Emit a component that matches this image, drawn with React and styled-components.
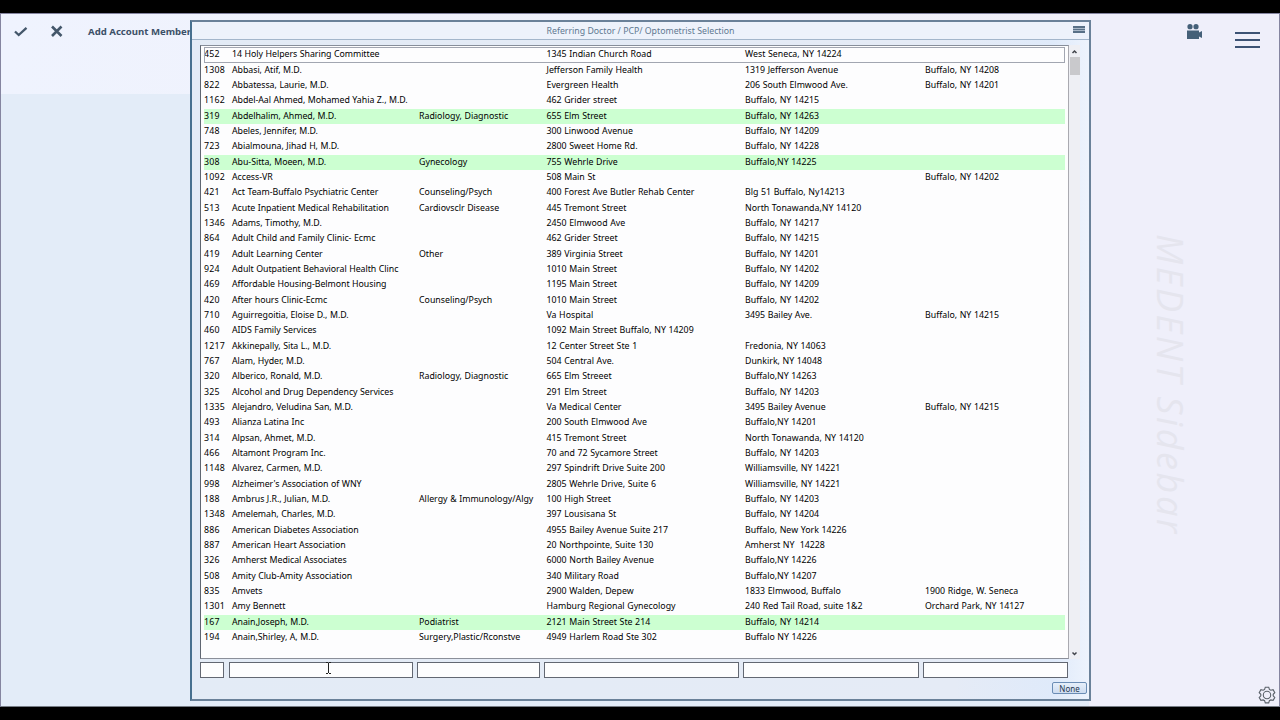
import React from 'react';
import styled, { createGlobalStyle } from 'styled-components';

const GlobalStyle = createGlobalStyle`
  * {
    box-sizing: border-box;
  }

  body {
    margin: 0;
    background: #000;
    font-family: 'Noto Sans', 'Open Sans', sans-serif;
  }
`;

const Screen = styled.div`
  width: 1280px;
  height: 720px;
  padding: 13px 0 13px;
  background: #000;
  overflow: hidden;
`;

const Workspace = styled.div`
  position: relative;
  display: flex;
  height: 694px;
  border: 1px solid #8585a0;
  border-bottom-color: #777d86;
  background: #e9f0f9;
`;

const MainArea = styled.main`
  flex: 1;
  display: flex;
  flex-direction: column;
  background: #e3ecf8;
`;

const Toolbar = styled.header`
  display: flex;
  align-items: flex-start;
  height: 80px;
  padding: 9px 0 0 12px;
  background: linear-gradient(90deg, #eff3fe, #f1f0f9);
`;

const PageTitle = styled.h1`
  margin: 0 0 0 24px;
  color: #3c5068;
  font: 700 9.6px/17px 'Noto Sans', sans-serif;
  white-space: nowrap;
`;

const Sidebar = styled.aside`
  display: flex;
  flex-direction: column;
  width: 190px;
  background: #efeffa;
`;

const SidebarTools = styled.div`
  display: flex;
  gap: 32px;
  height: 220px;
  padding: 10px 0 0 97px;
`;

const MenuLines = styled.span`
  display: flex;
  flex-direction: column;
  gap: 5px;
  width: 25px;
  padding-top: 8px;

  i {
    height: 2px;
    background: #3c5274;
  }
`;

const Watermark = styled.div`
  align-self: flex-start;
  margin-left: 62px;
  color: #e5e5ee;
  font: italic 400 36px/38px 'Open Sans', sans-serif;
  letter-spacing: 2.6px;
  white-space: nowrap;
  writing-mode: vertical-rl;
`;

const SidebarFooter = styled.div`
  display: flex;
  justify-content: flex-end;
  margin-top: auto;
  padding: 0 3px 2px 0;

  svg {
    display: block;
  }
`;

const Dialog = styled.section`
  position: absolute;
  top: 6px;
  left: 189px;
  display: flex;
  flex-direction: column;
  width: 901px;
  height: 681px;
  border: 2px solid #6a8199;
  border-left-color: #47708f;
  background: linear-gradient(90deg, #e3ebf6 0, #e5ebf6 85%, #dfeafa 96%, #edf3fd 100%);
`;

const TitleBar = styled.div`
  display: grid;
  grid-template-columns: 16px 1fr 16px;
  height: 18px;
  border-bottom: 1px solid #a3b6cb;
  background: #edf2fb;
`;

const DialogTitle = styled.h2`
  margin: 0;
  color: #5f7991;
  font-size: 8.75px;
  font-weight: 400;
  line-height: 19px;
  text-align: center;
`;

const TitleMenu = styled.span`
  width: 12px;
  height: 7px;
  margin-top: 4px;
  border-top: 2px solid #587087;
  border-bottom: 2px solid #587087;
  background: linear-gradient(#a9b8c8 1px, #587087 1px, #587087 2px, #a9b8c8 2px);
`;

const ListArea = styled.div`
  display: flex;
  height: 614px;
  margin: 5px 8px 0;
`;

const DoctorList = styled.div`
  width: 869px;
  padding: 1.4px 3px 0;
  border: 1px solid #8b8f99;
  border-left-color: #5f6671;
  border-top-color: #878e9a;
  border-right-color: #a9a9b0;
  background: #fdfdfe;
`;

const Row = styled.div`
  display: grid;
  grid-template-columns: 28px 187px 127.5px 198.5px 180px 1fr;
  width: 861px;
  height: 15.342px;
  background: ${({ $marked }) => ($marked ? '#ccffd1' : 'transparent')};
  outline: ${({ $selected }) => ($selected ? '1px solid #a2a6b1' : 'none')};
  outline-offset: -1px;
  color: #000;
  font-size: 8.8px;
  line-height: 15px;
  word-spacing: 0.3px;
  white-space: pre;

  span:first-child {
    letter-spacing: 0.25px;
  }

  span:nth-child(2) {
    letter-spacing: -0.04px;
  }
`;

const ScrollBar = styled.div`
  display: flex;
  flex-direction: column;
  align-items: center;
  width: 11px;
  background: #eeeff4;

  svg {
    flex: none;
  }
`;

const ScrollThumb = styled.div`
  width: 10px;
  height: 18px;
  margin: 1px 0 auto;
  background: #c9c9cc;
`;

const Filters = styled.div`
  display: grid;
  grid-template-columns: 25px 184px 123px 195px 176px 145px;
  column-gap: 4px;
  margin: 3px 0 0 8px;

  input:first-child {
    width: 24px;
  }
`;

const FilterInput = styled.input`
  width: 100%;
  height: 16px;
  padding: 0 3px;
  border: 1px solid #626772;
  border-radius: 0;
  background: #fdfdfe;
  font: 8.8px 'Noto Sans', sans-serif;
`;

const DialogFooter = styled.div`
  display: flex;
  justify-content: flex-end;
  padding: 4px 2px 0 0;
`;

const NoneButton = styled.button`
  width: 35px;
  height: 12px;
  padding: 0;
  border: 1px solid #6b8db5;
  border-radius: 2px;
  background: linear-gradient(#e6effa, #cddcf0);
  color: #26384f;
  font: 8px/9px 'Noto Sans', sans-serif;
`;

const TextCursor = styled.svg`
  position: absolute;
  top: 648px;
  left: 324px;
`;

const Check = styled.svg`
  width: 16px;
  height: 14px;
`;

const Close = styled.svg`
  width: 14px;
  height: 14px;
  margin: 1px 0 0 21px;
`;

// id, name, specialty, address lines
const doctors = [
  ['452', '14 Holy Helpers Sharing Committee', '', '1345 Indian Church Road', 'West Seneca, NY 14224', ''],
  ['1308', 'Abbasi, Atif, M.D.', '', 'Jefferson Family Health', '1319 Jefferson Avenue', 'Buffalo, NY 14208'],
  ['822', 'Abbatessa, Laurie, M.D.', '', 'Evergreen Health', '206 South Elmwood Ave.', 'Buffalo, NY 14201'],
  ['1162', 'Abdel-Aal Ahmed, Mohamed Yahia Z., M.D.', '', '462 Grider street', 'Buffalo, NY 14215', ''],
  ['319', 'Abdelhalim, Ahmed, M.D.', 'Radiology, Diagnostic', '655 Elm Street', 'Buffalo, NY 14263', ''],
  ['748', 'Abeles, Jennifer, M.D.', '', '300 Linwood Avenue', 'Buffalo, NY 14209', ''],
  ['723', 'Abialmouna, Jihad H, M.D.', '', '2800 Sweet Home Rd.', 'Buffalo, NY 14228', ''],
  ['308', 'Abu-Sitta, Moeen, M.D.', 'Gynecology', '755 Wehrle Drive', 'Buffalo,NY 14225', ''],
  ['1092', 'Access-VR', '', '508 Main St', '', 'Buffalo, NY 14202'],
  ['421', 'Act Team-Buffalo Psychiatric Center', 'Counseling/Psych', '400 Forest Ave Butler Rehab Center', 'Blg 51 Buffalo, Ny14213', ''],
  ['513', 'Acute Inpatient Medical Rehabilitation', 'Cardiovsclr Disease', '445 Tremont Street', 'North Tonawanda,NY 14120', ''],
  ['1346', 'Adams, Timothy, M.D.', '', '2450 Elmwood Ave', 'Buffalo, NY 14217', ''],
  ['864', 'Adult Child and Family Clinic- Ecmc', '', '462 Grider Street', 'Buffalo, NY 14215', ''],
  ['419', 'Adult Learning Center', 'Other', '389 Virginia Street', 'Buffalo, NY 14201', ''],
  ['924', 'Adult Outpatient Behavioral Health Clinc', '', '1010 Main Street', 'Buffalo, NY 14202', ''],
  ['469', 'Affordable Housing-Belmont Housing', '', '1195 Main Street', 'Buffalo, NY 14209', ''],
  ['420', 'After hours Clinic-Ecmc', 'Counseling/Psych', '1010 Main Street', 'Buffalo, NY 14202', ''],
  ['710', 'Aguirregoitia, Eloise D., M.D.', '', 'Va Hospital', '3495 Bailey Ave.', 'Buffalo, NY 14215'],
  ['460', 'AIDS Family Services', '', '1092 Main Street Buffalo, NY 14209', '', ''],
  ['1217', 'Akkinepally, Sita L., M.D.', '', '12 Center Street Ste 1', 'Fredonia, NY 14063', ''],
  ['767', 'Alam, Hyder, M.D.', '', '504 Central Ave.', 'Dunkirk, NY 14048', ''],
  ['320', 'Alberico, Ronald, M.D.', 'Radiology, Diagnostic', '665 Elm Streeet', 'Buffalo,NY 14263', ''],
  ['325', 'Alcohol and Drug Dependency Services', '', '291 Elm Street', 'Buffalo, NY 14203', ''],
  ['1335', 'Alejandro, Veludina San, M.D.', '', 'Va Medical Center', '3495 Bailey Avenue', 'Buffalo, NY 14215'],
  ['493', 'Alianza Latina Inc', '', '200 South Elmwood Ave', 'Buffalo,NY 14201', ''],
  ['314', 'Alpsan, Ahmet, M.D.', '', '415 Tremont Street', 'North Tonawanda, NY 14120', ''],
  ['466', 'Altamont Program Inc.', '', '70 and 72 Sycamore Street', 'Buffalo, NY 14203', ''],
  ['1148', 'Alvarez, Carmen, M.D.', '', '297 Spindrift Drive Suite 200', 'Williamsville, NY 14221', ''],
  ['998', "Alzheimer's Association of WNY", '', '2805 Wehrle Drive, Suite 6', 'Williamsville, NY 14221', ''],
  ['188', 'Ambrus J.R., Julian, M.D.', 'Allergy & Immunology/Algy', '100 High Street', 'Buffalo, NY 14203', ''],
  ['1348', 'Amelemah, Charles, M.D.', '', '397 Lousisana St', 'Buffalo, NY 14204', ''],
  ['886', 'American Diabetes Association', '', '4955 Bailey Avenue Suite 217', 'Buffalo, New York 14226', ''],
  ['887', 'American Heart Association', '', '20 Northpointe, Suite 130', 'Amherst NY  14228', ''],
  ['326', 'Amherst Medical Associates', '', '6000 North Bailey Avenue', 'Buffalo,NY 14226', ''],
  ['508', 'Amity Club-Amity Association', '', '340 Military Road', 'Buffalo,NY 14207', ''],
  ['835', 'Amvets', '', '2900 Walden, Depew', '1833 Elmwood, Buffalo', '1900 Ridge, W. Seneca'],
  ['1301', 'Amy Bennett', '', 'Hamburg Regional Gynecology', '240 Red Tail Road, suite 1&2', 'Orchard Park, NY 14127'],
  ['167', 'Anain,Joseph, M.D.', 'Podiatrist', '2121 Main Street Ste 214', 'Buffalo, NY 14214', ''],
  ['194', 'Anain,Shirley, A, M.D.', 'Surgery,Plastic/Rconstve', '4949 Harlem Road Ste 302', 'Buffalo NY 14226', ''],
];

const marked = ['319', '308', '167'];
const filterNames = ['id', 'name', 'specialty', 'address', 'city', 'other'];

const CheckIcon = () => (
  <Check viewBox="0 0 16 14">
    <path d="M2 8.500 5.700 12 13.500 4.800" fill="none" stroke="#44576a" strokeWidth="2.3" />
  </Check>
);

const CloseIcon = () => (
  <Close viewBox="0 0 14 14">
    <path d="M2 2.5 11.5 12M11.5 2.5 2 12" fill="none" stroke="#44576a" strokeWidth="2.6" />
  </Close>
);

const CameraIcon = () => (
  <svg width="17" height="16" viewBox="0 0 17 16" fill="#456078">
    <circle cx="4" cy="2.7" r="2.6" />
    <circle cx="10" cy="2.7" r="2.6" />
    <path d="M1 6.5h12v2l3-1.5v7l-3-1.5V15H1z" />
  </svg>
);

const GearIcon = () => (
  <svg width="18" height="18" viewBox="0 0 18 18" fill="none" stroke="#596068" strokeWidth="1.1">
    <path d="M7.3 1.2h3.4l.7 2.2 1.4.8 2.3-.5 1.7 2.9-1.6 1.7v1.5l1.6 1.7-1.7 2.9-2.3-.5-1.4.8-.7 2.2H7.3l-.7-2.2-1.4-.8-2.3.5-1.7-2.9 1.6-1.7V8.300L1.200 6.600l1.700-2.900 2.300.5 1.400-.8z" />
    <circle cx="9" cy="9" r="3.7" />
  </svg>
);

const Arrow = ({ down }) => (
  <svg width="11" height="11" viewBox="0 0 11 11">
    <path
      d={down ? 'M3.5 4.5 5.5 6.5 7.5 4.5' : 'M3.5 8 5.5 6 7.5 8'}
      fill="none"
      stroke="#41444b"
      strokeWidth="1.5"
    />
  </svg>
);

const App = () => {
  return (
    <Screen>
      <GlobalStyle />
      <Workspace>
        <MainArea>
          <Toolbar>
            <CheckIcon />
            <CloseIcon />
            <PageTitle>Add Account Member</PageTitle>
          </Toolbar>
        </MainArea>
        <Sidebar>
          <SidebarTools>
            <CameraIcon />
            <MenuLines>
              <i />
              <i />
              <i />
            </MenuLines>
          </SidebarTools>
          <Watermark>MEDENT Sidebar</Watermark>
          <SidebarFooter>
            <GearIcon />
          </SidebarFooter>
        </Sidebar>
        <Dialog>
          <TitleBar>
            <span />
            <DialogTitle>Referring Doctor / PCP/ Optometrist Selection</DialogTitle>
            <TitleMenu />
          </TitleBar>
          <ListArea>
            <DoctorList>
              {doctors.map((cells, index) => (
                <Row key={cells[0]} $marked={marked.includes(cells[0])} $selected={index === 0}>
                  {cells.map((cell, i) => (
                    <span key={filterNames[i]}>{cell}</span>
                  ))}
                </Row>
              ))}
            </DoctorList>
            <ScrollBar>
              <Arrow />
              <ScrollThumb />
              <Arrow down />
            </ScrollBar>
          </ListArea>
          <Filters>
            {filterNames.map((name) => (
              <FilterInput key={name} aria-label={name} />
            ))}
          </Filters>
          <DialogFooter>
            <NoneButton>None</NoneButton>
          </DialogFooter>
        </Dialog>
        <TextCursor width="7" height="12" viewBox="0 0 7 12">
          <path d="M1 .5h2M4 .5h2M3.5 1v10M1 11.5h2M4 11.5h2" stroke="#222" fill="none" />
        </TextCursor>
      </Workspace>
    </Screen>
  );
};

export default App;
